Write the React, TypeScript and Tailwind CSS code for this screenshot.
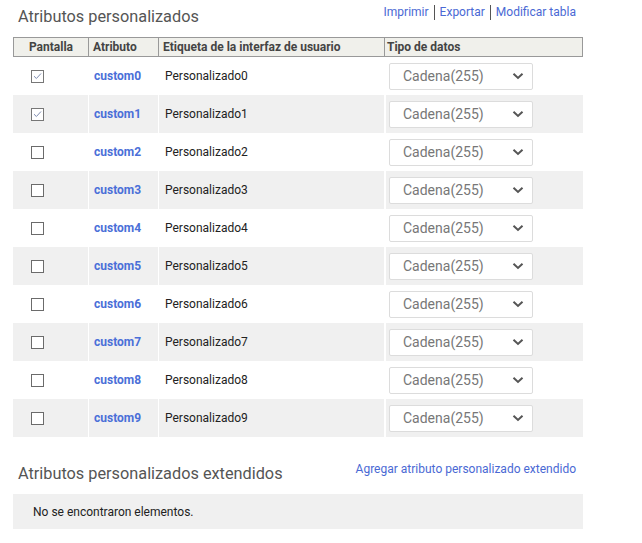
import React from "react";

const rows = Array.from({ length: 10 }, (_, i) => ({
  name: `custom${i}`,
  label: `Personalizado${i}`,
  shown: i < 2,
}));

function Box({ checked }: { checked: boolean }) {
  return (
    <span
      className={
        "inline-flex h-[13px] w-[13px] items-center justify-center bg-white " +
        (checked ? "border border-[#777]" : "border-[1.5px] border-[#6b6b6b]")
      }
    >
      {checked && (
        <svg width="9" height="8" viewBox="0 0 9 8" fill="none">
          <path d="M1 4.2 3.4 6.5 8 1.5" stroke="#7d8bb0" strokeWidth="1" />
        </svg>
      )}
    </span>
  );
}

function TypeSelect() {
  return (
    <div className="flex h-[27px] w-[144px] items-center justify-between rounded-[2px] border border-[#dcdcdc] bg-white pl-[13px] pr-[8px] text-[14px] text-[#777]">
      <span>Cadena(255)</span>
      <svg width="12" height="8" viewBox="0 0 12 8" fill="none">
        <path d="M1.5 1.8 6 6 10.5 1.8" stroke="#555" strokeWidth="2" />
      </svg>
    </div>
  );
}

export default function App() {
  return (
    <div
      className="w-[642px] bg-white pl-[13px] text-[#222]"
      style={{ fontFamily: "Roboto, 'Liberation Sans', sans-serif" }}
    >
      <div className="w-[570px]">
        <div className="flex items-start justify-between pt-[5px]">
          <h2 className="ml-[5px] pt-[2px] text-[16.3px] leading-[20px] text-[#555]">
            Atributos personalizados
          </h2>
          <div className="mr-[7px] flex items-center text-[12px] leading-[15px] text-[#4a69d4]">
            <span>Imprimir</span>
            <span className="mx-[5px] h-[15px] w-px bg-[#555]" />
            <span>Exportar</span>
            <span className="mx-[5px] h-[15px] w-px bg-[#555]" />
            <span>Modificar tabla</span>
          </div>
        </div>

        <div className="mt-[10px]">
          <div className="flex h-[20px] border border-[#999] bg-[#f0f0eb] text-[12px] font-bold leading-[18px] text-[#444]">
            <div className="w-[74px] text-center">Pantalla</div>
            <div className="w-[70px] border-l border-[#999] pl-[4px]">Atributo</div>
            <div className="w-[226px] border-l border-[#999] pl-[4px]">
              Etiqueta de la interfaz de usuario
            </div>
            <div className="flex-1 border-l border-[#999] pl-[2px]">Tipo de datos</div>
          </div>
          {rows.map((r, i) => (
            <div
              key={r.name}
              className={
                "flex h-[38px] items-center text-[12px] " +
                (i % 2 ? "bg-[#f0f0f0]" : "bg-white")
              }
            >
              <div className="flex h-full w-[75px] items-center pl-[18px]">
                <Box checked={r.shown} />
              </div>
              <div className="flex h-full w-[70px] items-center border-l border-white pl-[5px] font-bold text-[#4a6fd8]">
                {r.name}
              </div>
              <div className="flex h-full w-[226px] items-center border-l border-white pl-[6px]">
                {r.label}
              </div>
              <div className="flex h-full flex-1 items-center border-l-2 border-white pl-[3px]">
                <TypeSelect />
              </div>
            </div>
          ))}
        </div>

        <div className="mt-[25px] flex items-start justify-between">
          <h2 className="ml-[5px] pt-[2px] text-[16.3px] leading-[20px] text-[#555]">
            Atributos personalizados extendidos
          </h2>
          <span className="mr-[7px] text-[12px] leading-[15px] text-[#4a69d4]">
            Agregar atributo personalizado extendido
          </span>
        </div>
        <div className="mt-[10px] flex h-[35px] items-center bg-[#f0f0f0] pl-[20px] text-[12px] text-[#222]">
          No se encontraron elementos.
        </div>
      </div>
    </div>
  );
}
